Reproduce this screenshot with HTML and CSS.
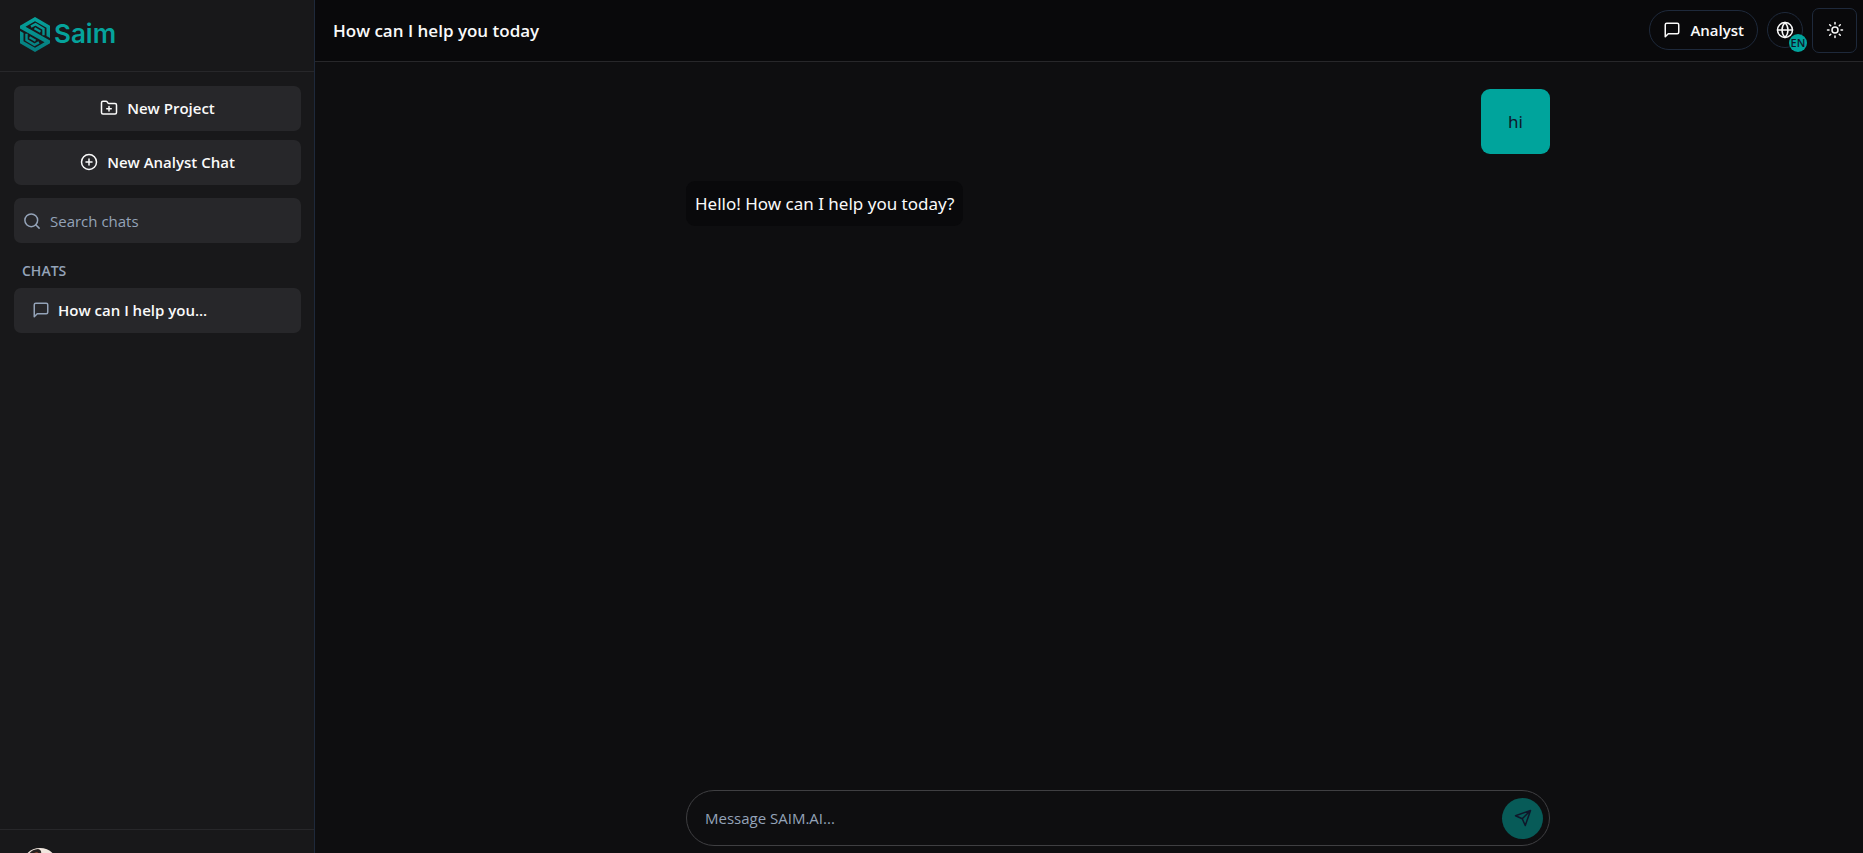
FILE: index.html
```html
<!doctype html>
<html lang="en">
<head>
    <meta charset="UTF-8" />
    <meta name="viewport" content="width=device-width, initial-scale=1">
    <title>Saim</title>
    <link rel="stylesheet" href="styles.css">
</head>
<body>
    <aside class="sidebar">
        <div class="brand">
            <svg class="brand-mark" viewBox="0 0 30 35" aria-hidden="true">
                <defs>
                    <linearGradient id="markFill" x1="0" y1="0" x2="0" y2="35" gradientUnits="userSpaceOnUse">
                        <stop offset="0" stop-color="#05a39c"/>
                        <stop offset="1" stop-color="#067a7c"/>
                    </linearGradient>
                </defs>
                <path fill="url(#markFill)" d="M0 11.500V8.700L15 0l15 8.700v12.300l-3.500-2V10.700L15 4.200 5.500 9.700 30 23.500v2.800L15 35 0 26.300V14l3.500 2v8.300L15 30.800l9.500-5.500z"/>
                <g fill="none" stroke="url(#markFill)" stroke-width="2.400">
                    <path d="M11 9.600l4.500-2.400 8 4.800v6.200"/>
                    <path d="M14.500 11.300l6 3.400"/>
                    <path d="M19 25.400l-4.500 2.400-8-4.800v-6.200"/>
                    <path d="M15.500 23.700l-6-3.400"/>
                </g>
            </svg>
            <span class="brand-name">Saim</span>
        </div>
        <div class="sidebar-body">
            <button class="side-btn" type="button">
                <svg class="icon" viewBox="0 0 24 24" aria-hidden="true"><path d="M12 10v6M9 13h6M20 20a2 2 0 0 0 2-2V8a2 2 0 0 0-2-2h-7.900a2 2 0 0 1-1.690-.9L9.600 3.900A2 2 0 0 0 7.930 3H4a2 2 0 0 0-2 2v13a2 2 0 0 0 2 2Z"/></svg>
                New Project
            </button>
            <button class="side-btn" type="button">
                <svg class="icon" viewBox="0 0 24 24" aria-hidden="true"><circle cx="12" cy="12" r="10"/><path d="M8 12h8M12 8v8"/></svg>
                New Analyst Chat
            </button>
            <label class="search">
                <svg class="icon" viewBox="0 0 24 24" aria-hidden="true"><circle cx="11" cy="11" r="8.500"/><path d="m21.500 21.500-4.500-4.500"/></svg>
                <input type="text" placeholder="Search chats" aria-label="Search chats">
            </label>
            <h2 class="section-title">CHATS</h2>
            <a class="chat-link" href="#">
                <svg class="icon" viewBox="0 0 24 24" aria-hidden="true"><path d="M21 15a2 2 0 0 1-2 2H7l-4 4V5a2 2 0 0 1 2-2h14a2 2 0 0 1 2 2z"/></svg>
                How can I help you...
            </a>
        </div>
        <div class="sidebar-footer">
            <svg class="avatar" viewBox="0 0 36 36" aria-hidden="true">
                <circle cx="18" cy="18" r="18" fill="#f0e6de"/>
                <path d="M6 8Q8 2 16 1q4 1 3 5v12H6z" fill="#25211f"/>
                <path d="M12 5q4-2 5 1v10h-6z" fill="#9a5138"/>
            </svg>
        </div>
    </aside>

    <main class="main">
        <header class="topbar">
            <h1 class="title">How can I help you today</h1>
            <div class="actions">
                <button class="mode-btn" type="button">
                    <svg class="icon" viewBox="0 0 24 24" aria-hidden="true"><path d="M21 15a2 2 0 0 1-2 2H7l-4 4V5a2 2 0 0 1 2-2h14a2 2 0 0 1 2 2z"/></svg>
                    Analyst
                </button>
                <button class="lang-btn" type="button" aria-label="Language">
                    <svg class="icon" viewBox="0 0 24 24" aria-hidden="true"><circle cx="12" cy="12" r="10"/><path d="M12 2a14.500 14.500 0 0 0 0 20 14.500 14.500 0 0 0 0-20M2 12h20"/></svg>
                    <span class="lang-badge">EN</span>
                </button>
                <button class="theme-btn" type="button" aria-label="Theme">
                    <svg class="icon" viewBox="0 0 24 24" aria-hidden="true"><circle cx="12" cy="12" r="4"/><path d="M12 2v2M12 20v2M4.930 4.930l1.410 1.410M17.660 17.660l1.410 1.410M2 12h2M20 12h2M6.340 17.660l-1.410 1.410M19.070 4.930l-1.410 1.410"/></svg>
                </button>
            </div>
        </header>
        <div class="chat">
            <div class="messages">
                <p class="msg msg-user">hi</p>
                <p class="msg msg-bot">Hello! How can I help you today?</p>
            </div>
            <form class="composer">
                <input type="text" placeholder="Message SAIM.AI..." aria-label="Message">
                <button class="send-btn" type="button" aria-label="Send">
                    <svg class="icon" viewBox="0 0 24 24" aria-hidden="true"><path d="M22 2 15 22l-4-9-9-4ZM22 2 11 13"/></svg>
                </button>
            </form>
        </div>
    </main>
</body>
</html>
```
FILE: styles.css
```css
* {
    box-sizing: border-box;
}
body {
    margin: 0;
    height: 100vh;
    display: flex;
    overflow: hidden;
    background: #0e0e10;
    color: #fafafa;
    font-family: "Segoe UI", "Open Sans", "Noto Sans", sans-serif;
    font-size: 15px;
}
button, input {
    font: inherit;
    color: inherit;
}
button {
    cursor: pointer;
}
input {
    flex: 1;
    min-width: 0;
    padding: 0;
    border: none;
    outline: none;
    background: none;
}
input::placeholder {
    color: #94a3b8;
    opacity: 1;
}
.icon {
    width: 18px;
    height: 18px;
    flex: none;
    fill: none;
    stroke: currentColor;
    stroke-width: 2;
    stroke-linecap: round;
    stroke-linejoin: round;
}

/* sidebar */
.sidebar {
    width: 315px;
    flex: none;
    display: flex;
    flex-direction: column;
    background: #18181a;
    border-right: 1px solid #1e293b;
}
.brand {
    height: 72px;
    display: flex;
    align-items: center;
    gap: 4px;
    padding: 0 20px 3px;
    border-bottom: 1px solid #27272a;
}
.brand-mark {
    width: 30px;
    height: 35px;
}
.brand-name {
    font-family: Inter, sans-serif;
    font-size: 26px;
    font-weight: 600;
    line-height: 32px;
    color: #05a39c;
}
.sidebar-body {
    flex: 1;
    min-height: 0;
    padding: 14px 13px 0 14px;
}
.side-btn, .search, .chat-link {
    width: 100%;
    height: 45px;
    display: flex;
    align-items: center;
    background: #27272a;
    border: none;
    border-radius: 7px;
}
.side-btn {
    justify-content: center;
    gap: 9px;
    margin-bottom: 9px;
    padding: 0 0 2px;
    font-weight: 600;
}
.search {
    gap: 9px;
    margin-top: 13px;
    padding: 0 9px;
    color: #94a3b8;
}
.section-title {
    margin: 18px 8px 7px;
    font-size: 14px;
    font-weight: 600;
    line-height: 20px;
    color: #94a3b8;
}
.chat-link {
    gap: 8px;
    padding: 0 18px 2px;
    font-weight: 600;
    color: #fafafa;
    text-decoration: none;
}
.chat-link .icon {
    color: #94a3b8;
}
.sidebar-footer {
    height: 24px;
    flex: none;
    padding: 18px 22px 0;
    border-top: 1px solid #27272a;
    overflow: hidden;
}
.avatar {
    display: block;
    width: 36px;
    height: 36px;
}

/* main column */
.main {
    flex: 1;
    min-width: 0;
    display: flex;
    flex-direction: column;
}
.topbar {
    height: 62px;
    flex: none;
    display: flex;
    align-items: center;
    justify-content: space-between;
    padding: 0 6px 1px 18px;
    background: #09090b;
    border-bottom: 1px solid #27272a;
}
.title {
    margin: 0;
    font-size: 17px;
    font-weight: 600;
}
.actions {
    display: flex;
    align-items: center;
    gap: 9px;
}
.actions button {
    display: flex;
    align-items: center;
    justify-content: center;
    padding: 0;
    background: none;
    border: 1px solid #1e293b;
}
.actions .mode-btn {
    height: 40px;
    gap: 9px;
    padding: 0 13px;
    border-radius: 20px;
    font-weight: 600;
}
.lang-btn {
    position: relative;
    width: 36px;
    height: 36px;
    border-radius: 50%;
}
.lang-badge {
    position: absolute;
    right: -5px;
    bottom: -5px;
    width: 18px;
    height: 18px;
    border-radius: 50%;
    background: #00a49c;
    color: #0f172a;
    font-size: 11px;
    font-weight: 600;
    line-height: 17px;
    text-align: center;
}
.theme-btn {
    width: 45px;
    height: 45px;
    border-radius: 7px;
}
.chat {
    flex: 1;
    min-height: 0;
    display: flex;
    flex-direction: column;
    align-items: center;
    padding: 27px 0 7px 58px;
}
.messages, .composer {
    width: 100%;
    max-width: 864px;
}
.messages {
    flex: 1;
    display: flex;
    flex-direction: column;
    gap: 27px;
}
.msg {
    margin: 0;
    border-radius: 9px;
    font-family: "Segoe UI", "Noto Sans", sans-serif;
    font-size: 17px;
    line-height: 29px;
}
.msg-user {
    align-self: flex-end;
    padding: 18px 27px;
    background: #00a49c;
    color: #0f172a;
}
.msg-bot {
    align-self: flex-start;
    padding: 8px 9px;
    background: #09090b;
}
.composer {
    height: 56px;
    display: flex;
    align-items: center;
    padding: 0 6px 0 18px;
    border: 1px solid #3f3f42;
    border-radius: 28px;
}
.send-btn {
    width: 41px;
    height: 41px;
    display: flex;
    align-items: center;
    justify-content: center;
    padding: 0;
    border: none;
    border-radius: 50%;
    background: #075b58;
    color: #0f172a;
}
```
